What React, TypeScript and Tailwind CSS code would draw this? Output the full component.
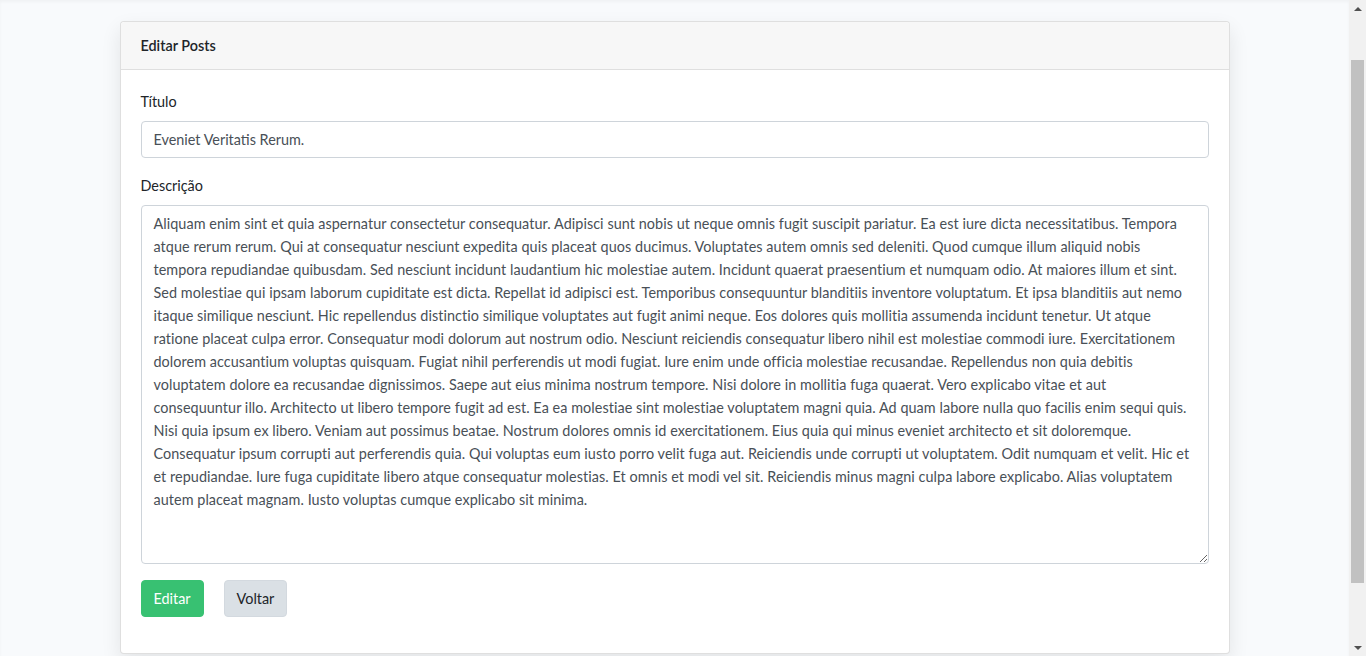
const descricao = [
  "Aliquam enim sint et quia aspernatur consectetur consequatur. Adipisci sunt nobis ut neque omnis fugit suscipit pariatur. Ea est iure dicta necessitatibus. Tempora",
  "atque rerum rerum. Qui at consequatur nesciunt expedita quis placeat quos ducimus. Voluptates autem omnis sed deleniti. Quod cumque illum aliquid nobis",
  "tempora repudiandae quibusdam. Sed nesciunt incidunt laudantium hic molestiae autem. Incidunt quaerat praesentium et numquam odio. At maiores illum et sint.",
  "Sed molestiae qui ipsam laborum cupiditate est dicta. Repellat id adipisci est. Temporibus consequuntur blanditiis inventore voluptatum. Et ipsa blanditiis aut nemo",
  "itaque similique nesciunt. Hic repellendus distinctio similique voluptates aut fugit animi neque. Eos dolores quis mollitia assumenda incidunt tenetur. Ut atque",
  "ratione placeat culpa error. Consequatur modi dolorum aut nostrum odio. Nesciunt reiciendis consequatur libero nihil est molestiae commodi iure. Exercitationem",
  "dolorem accusantium voluptas quisquam. Fugiat nihil perferendis ut modi fugiat. Iure enim unde officia molestiae recusandae. Repellendus non quia debitis",
  "voluptatem dolore ea recusandae dignissimos. Saepe aut eius minima nostrum tempore. Nisi dolore in mollitia fuga quaerat. Vero explicabo vitae et aut",
  "consequuntur illo. Architecto ut libero tempore fugit ad est. Ea ea molestiae sint molestiae voluptatem magni quia. Ad quam labore nulla quo facilis enim sequi quis.",
  "Nisi quia ipsum ex libero. Veniam aut possimus beatae. Nostrum dolores omnis id exercitationem. Eius quia qui minus eveniet architecto et sit doloremque.",
  "Consequatur ipsum corrupti aut perferendis quia. Qui voluptas eum iusto porro velit fuga aut. Reiciendis unde corrupti ut voluptatem. Odit numquam et velit. Hic et",
  "et repudiandae. Iure fuga cupiditate libero atque consequatur molestias. Et omnis et modi vel sit. Reiciendis minus magni culpa labore explicabo. Alias voluptatem",
  "autem placeat magnam. Iusto voluptas cumque explicabo sit minima.",
].join("\n");

// classic browser scrollbar, page scrolled a bit down
const Scrollbar = () => (
  <aside className="w-[17px] shrink-0 flex flex-col bg-[#f1f1f1]">
    <div className="h-[17px] flex items-center justify-center">
      <svg width="8" height="4" viewBox="0 0 8 4">
        <path d="M0 4 L4 0 L8 4 Z" fill="#505050" />
      </svg>
    </div>
    <div className="flex-1 px-[2px] pt-[43px]">
      <div className="h-[523px] bg-[#c1c1c1]" />
    </div>
    <div className="h-[17px] flex items-center justify-center">
      <svg width="8" height="4" viewBox="0 0 8 4">
        <path d="M0 0 L8 0 L4 4 Z" fill="#505050" />
      </svg>
    </div>
  </aside>
);

const App = () => {
  return (
    <div className="flex h-screen overflow-hidden bg-[#f8fafc] text-[#212529] font-['Lato','Noto_Sans',sans-serif] text-[14.4px] leading-[1.6]">
      <main className="flex-1 pt-[21px] shadow-[inset_0_2px_3px_rgba(0,0,0,0.035)]">
        <div className="mx-auto w-[1110px] rounded bg-white border border-black/[0.125] shadow-[0_0.5rem_1.25rem_rgba(0,0,0,0.09)]">
          <div className="px-5 py-3 bg-[#f7f7f7] border-b border-[#dfdfdf] rounded-t font-semibold">
            Editar Posts
          </div>
          <form className="p-5" onSubmit={(e) => e.preventDefault()}>
            <div className="mb-4">
              <label className="block mb-2">Título</label>
              <input
                className="block w-full h-[37px] px-3 py-1.5 rounded border border-[#ced4da] bg-white text-[#495057] outline-none"
                defaultValue="Eveniet Veritatis Rerum."
              />
            </div>
            <div className="mb-4">
              <label className="block mb-2">Descrição</label>
              <textarea
                rows={15}
                wrap="off"
                className="block w-full h-[359px] px-3 py-1.5 rounded border border-[#ced4da] bg-white text-[#495057] leading-[23px] tracking-[0.06px] outline-none overflow-hidden"
                defaultValue={descricao}
              />
            </div>
            <div className="flex gap-5 mb-4">
              <button
                type="submit"
                className="h-[37px] px-3 rounded border border-[#38c172] bg-[#38c172] text-white"
              >
                Editar
              </button>
              <button
                type="button"
                className="h-[37px] px-3 rounded border border-[#d3d9df] bg-[#dae0e5] text-[#212529]"
              >
                Voltar
              </button>
            </div>
          </form>
        </div>
      </main>
      <Scrollbar />
    </div>
  );
};

export default App;
